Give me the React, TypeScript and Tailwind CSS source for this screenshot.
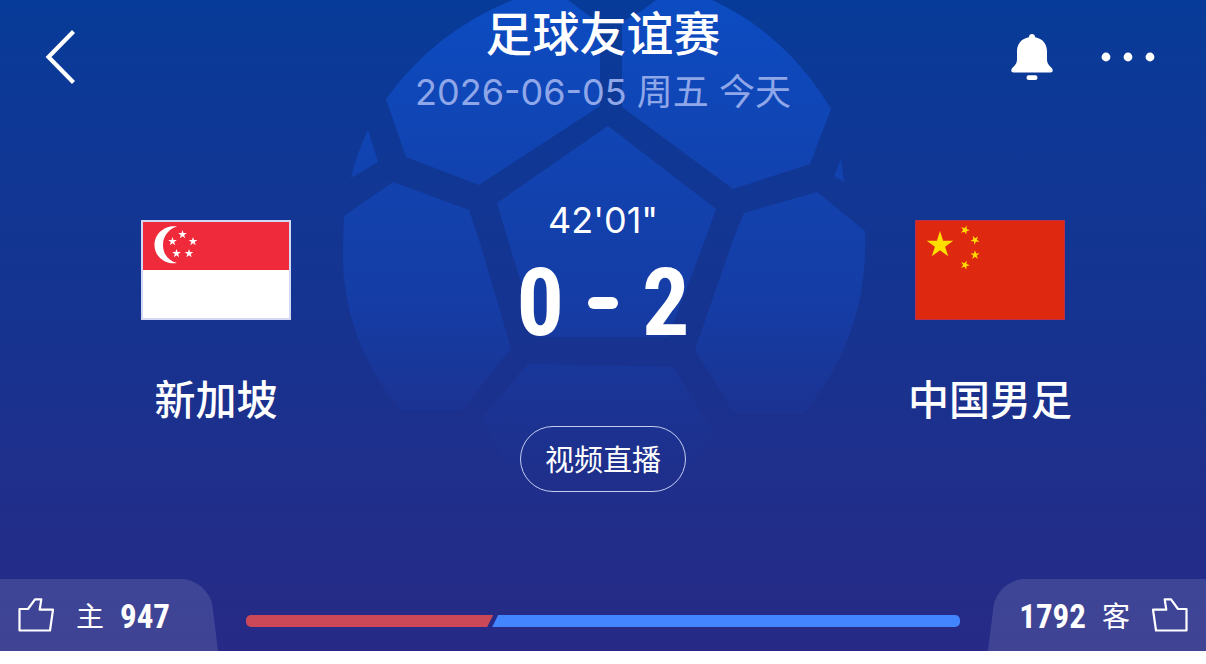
import React from "react";

const votes = { home: 947, away: 1792 };

const condensed = "font-['Roboto_Condensed','DejaVu_Sans_Condensed',sans-serif] font-bold";

function starPoints(cx: number, cy: number, r: number, turn = 0): string {
  return Array.from({ length: 10 }, (_, i) => {
    const radius = i % 2 === 0 ? r : r * 0.382;
    const a = ((i * 36 - 90 + turn) * Math.PI) / 180;
    return `${(cx + radius * Math.cos(a)).toFixed(2)},${(cy + radius * Math.sin(a)).toFixed(2)}`;
  }).join(" ");
}

function Football() {
  return (
    <svg
      className="pointer-events-none absolute top-0 left-1/2 h-[500px] w-[526px] -translate-x-1/2"
      viewBox="340 2 526 500"
      aria-hidden="true"
    >
      <defs>
        <linearGradient id="ball" x1="0" y1="0" x2="0" y2="480" gradientUnits="userSpaceOnUse">
          <stop offset="0" stopColor="#1464ff" stopOpacity="0.4" />
          <stop offset="0.35" stopColor="#1464ff" stopOpacity="0.26" />
          <stop offset="0.65" stopColor="#1464ff" stopOpacity="0.18" />
          <stop offset="0.83" stopColor="#1464ff" stopOpacity="0.06" />
          <stop offset="1" stopColor="#1464ff" stopOpacity="0" />
        </linearGradient>
      </defs>
      <g fill="url(#ball)">
        <path d="M513 2H568L588 17L600 25V108L479 187L406 159L386 101Q435 33 513 2Z" />
        <path d="M712 2H656L640 14L622 24V109L733 191L810 166L831 111Q786 36 712 2Z" />
        <path d="M368 132L378 164L351 180Q357 155 368 132Z" />
        <path d="M841 161L834 178L844 184Z" />
        <path d="M393 184L469 212L479 242L511 350L468 405L462 412H400Q340 337 343 250L344 218Z" />
        <path d="M608 128L716 211L705 242L668 339H538L508 242L497 205Z" />
        <path d="M817 194L744 215L733 242L695 352L735 416H803Q869 337 865 233Z" />
        <path d="M528 366L673 369L712 432L690 478Q604 500 515 478L482 420Z" />
      </g>
    </svg>
  );
}

function SingaporeFlag() {
  return (
    <svg className="h-[100px] w-[150px]" viewBox="0 0 150 100" role="img" aria-label="新加坡">
      <rect width="150" height="100" fill="#d3d8f3" />
      <rect x="2" y="2" width="146" height="48" fill="#ee2a3b" />
      <rect x="2" y="50" width="146" height="48" fill="#fff" />
      <path d="M36 6.500C26 4.500 13.500 12 13.500 25S26 45 36 43C28 41 22 34.500 22 25S28 9 36 6.500Z" fill="#fff" />
      <g fill="#fff">
        <polygon points={starPoints(41.5, 14.5, 4.6)} />
        <polygon points={starPoints(31.5, 21.5, 4.6)} />
        <polygon points={starPoints(52, 21.5, 4.6)} />
        <polygon points={starPoints(35.5, 33.5, 4.6)} />
        <polygon points={starPoints(48, 33.5, 4.6)} />
      </g>
    </svg>
  );
}

function ChinaFlag() {
  return (
    <svg className="h-[100px] w-[150px]" viewBox="0 0 150 100" role="img" aria-label="中国男足">
      <rect width="150" height="100" fill="#b5304f" />
      <rect x="1" y="1" width="148" height="98" fill="#de2910" />
      <g fill="#ffde00">
        <polygon points={starPoints(25, 25, 14)} />
        <polygon points={starPoints(50, 10, 4.8, 20)} />
        <polygon points={starPoints(60, 20, 4.8, 42)} />
        <polygon points={starPoints(60, 35, 4.8, 0)} />
        <polygon points={starPoints(50, 45, 4.8, 20)} />
      </g>
    </svg>
  );
}

function Thumb({ flipped = false }: { flipped?: boolean }) {
  return (
    <svg
      className={flipped ? "size-9 -scale-x-100" : "size-9"}
      viewBox="0 0 36 36"
      fill="none"
      stroke="#fff"
      strokeWidth="2.2"
      strokeLinejoin="round"
      aria-hidden="true"
    >
      <path d="M1.5 12H10L17 2.300H23.300L21.700 12.700H35L32 33.500H1.500Z" />
    </svg>
  );
}

function Team({ name, children }: { name: string; children: React.ReactNode }) {
  return (
    <div className="flex flex-col items-center gap-[50px] pt-[22px]">
      {children}
      <h2 className="text-[41px] leading-[60px] font-medium">{name}</h2>
    </div>
  );
}

export default function App() {
  return (
    <div className="min-h-screen bg-white font-['Inter','Noto_Sans_CJK_SC',sans-serif] text-white">
      <main className="relative overflow-hidden bg-linear-to-b from-[#073b99] via-[#163390] to-[#262a86]">
        <Football />

        <header className="relative grid grid-cols-[1fr_auto_1fr] items-start">
          <button type="button" aria-label="返回" className="mt-7 ml-11 w-8">
            <svg className="h-[58px] w-8" viewBox="0 0 32 58" fill="none" stroke="#fff" strokeWidth="4.2" aria-hidden="true">
              <path d="M29.5 3.5L4.5 29L29.5 54.5" />
            </svg>
          </button>
          <div className="text-center">
            <h1 className="text-[47px] leading-[68px] font-medium">足球友谊赛</h1>
            <p className="text-[36px] leading-12 text-[#8fa7e8]">2026-06-05 周五 今天</p>
          </div>
          <div className="mt-[34px] mr-[51px] flex items-start justify-end gap-12">
            <button type="button" aria-label="提醒">
              <svg className="h-[46px] w-[42px]" viewBox="0 0 42 46" fill="#fff" aria-hidden="true">
                <path d="M21 0Q23.6 0 24.2 3.2C31.5 4.5 36 10 36 17.5V25C36 29.5 38 31.5 41 34.2Q43 38.6 39.5 38.6H2.5Q-1 38.6 1 34.2C4 31.5 6 29.5 6 25V17.5C6 10 10.500 4.500 17.800 3.200Q18.400 0 21 0Z" />
                <rect x="15.500" y="41.300" width="11" height="4.700" rx="2.200" />
              </svg>
            </button>
            <button type="button" aria-label="更多">
              <svg className="h-[46px] w-[54px]" viewBox="0 0 54 46" fill="#fff" aria-hidden="true">
                <circle cx="5" cy="23" r="4.400" />
                <circle cx="27" cy="23" r="4.400" />
                <circle cx="49" cy="23" r="4.400" />
              </svg>
            </button>
          </div>
        </header>

        <section className="relative mt-[82px] grid grid-cols-[43fr_34fr_43fr]">
          <Team name="新加坡">
            <SingaporeFlag />
          </Team>
          <div className="flex flex-col items-center">
            <p className="text-[36px] leading-11">42'01"</p>
            <div className={`${condensed} mt-[13px] flex items-center gap-6 text-[94px] leading-[96px]`}>
              <span>0</span>
              <span role="img" aria-label="比" className="h-3 w-[30px] rounded-full bg-white" />
              <span>2</span>
            </div>
            <button
              type="button"
              className="mt-[75px] h-[66px] rounded-full border border-[#c3cdf2] px-6 pt-1 text-[29px] leading-10"
            >
              视频直播
            </button>
          </div>
          <Team name="中国男足">
            <ChinaFlag />
          </Team>
        </section>

        <footer className="relative mt-[87px] flex h-[72px] items-stretch">
          <button type="button" className="relative flex w-[218px] items-center pl-[18px]">
            <span className="absolute inset-y-0 right-0 -left-8 origin-bottom skew-x-[7deg] rounded-tr-[28px] bg-white/12" />
            <span className="relative flex items-center gap-[22px]">
              <Thumb />
              <span className="flex items-center gap-4">
                <span className="pt-1 text-[28px] leading-9">主</span>
                <span className={`${condensed} pt-1 text-[33px] leading-9`}>{votes.home}</span>
              </span>
            </span>
          </button>
          <div className="flex flex-1 items-center px-7 pt-3" role="img" aria-label="支持率">
            <span
              className="h-3 basis-0 rounded-l-[5px] bg-[#cb4859] [clip-path:polygon(0_0,100%_0,calc(100%-6px)_100%,0_100%)]"
              style={{ flexGrow: votes.home }}
            />
            <span
              className="-ml-px h-3 basis-0 rounded-r-[5px] bg-[#4285ff] [clip-path:polygon(6px_0,100%_0,100%_100%,0_100%)]"
              style={{ flexGrow: votes.away }}
            />
          </div>
          <button type="button" className="relative flex w-[218px] items-center justify-end pr-[18px]">
            <span className="absolute inset-y-0 -right-8 left-0 origin-bottom -skew-x-[7deg] rounded-tl-[28px] bg-white/12" />
            <span className="relative flex items-center gap-[22px]">
              <span className="flex items-center gap-4">
                <span className={`${condensed} pt-1 text-[33px] leading-9`}>{votes.away}</span>
                <span className="pt-1 text-[28px] leading-9">客</span>
              </span>
              <Thumb flipped />
            </span>
          </button>
        </footer>
      </main>
    </div>
  );
}
